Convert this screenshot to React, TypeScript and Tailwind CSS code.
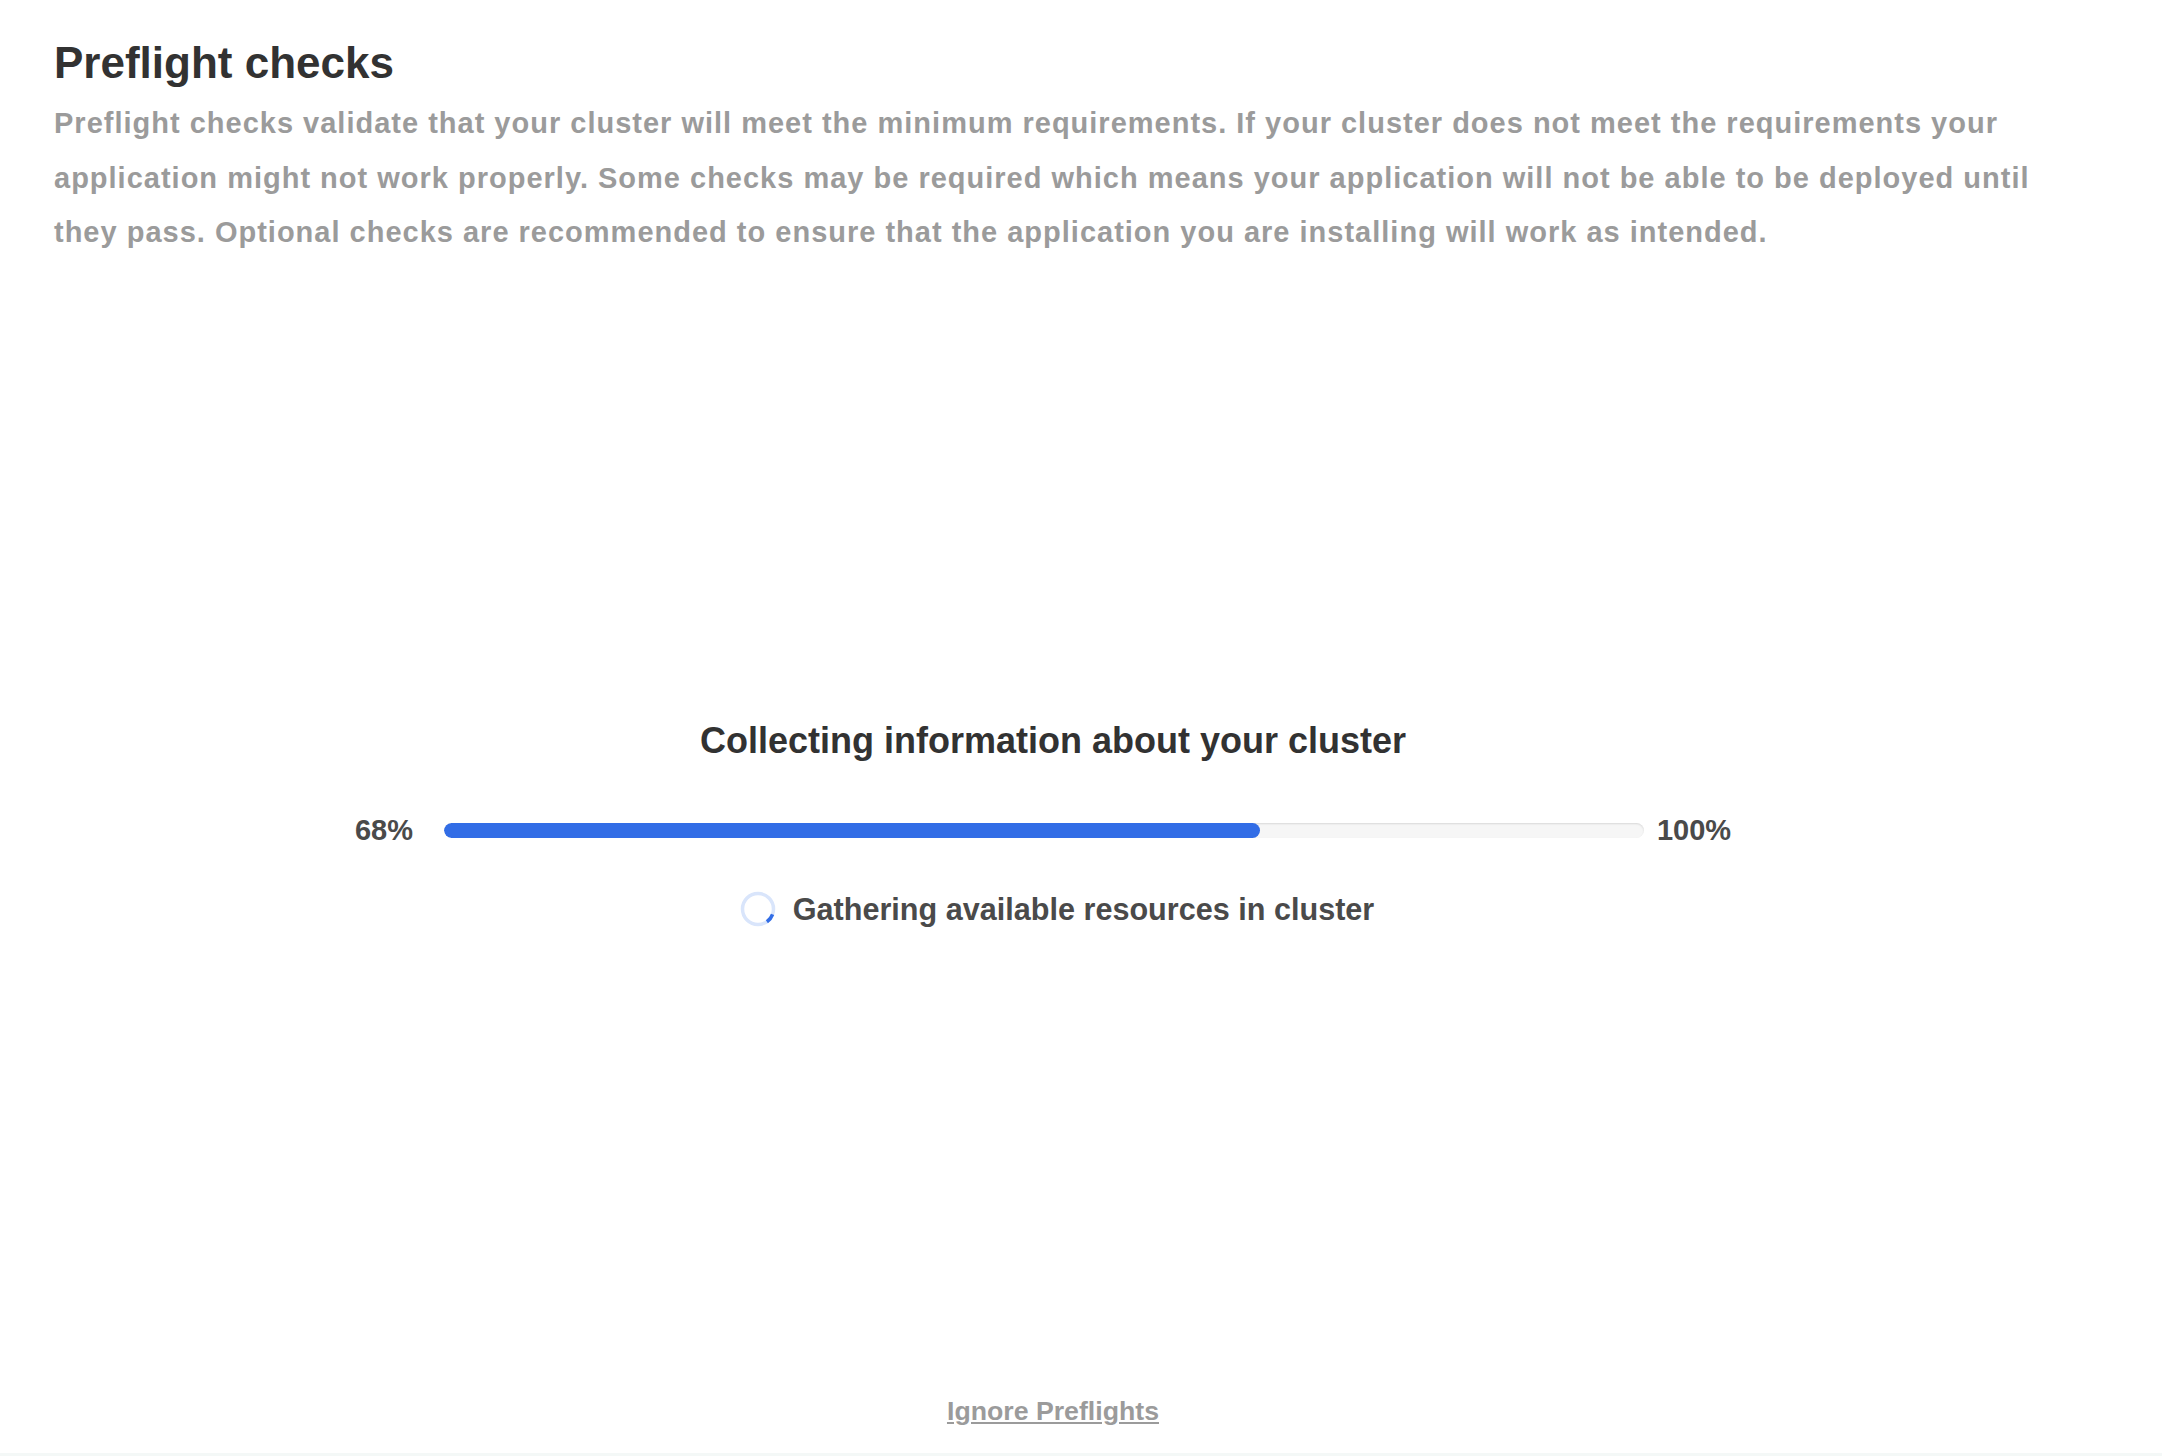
import React from 'react';

const PERCENT = 68;

const Spinner: React.FC = () => (
  <svg width="36" height="36" viewBox="0 0 36 36" className="shrink-0">
    <circle cx="18" cy="18" r="15.5" fill="none" stroke="#d9e5fb" strokeWidth="3.5" />
    <path d="M32.57 23.3 A15.5 15.5 0 0 1 26.89 30.7" fill="none" stroke="#326de6" strokeWidth="3.5" />
  </svg>
);

export default function App() {
  return (
    <div className="flex h-screen flex-col bg-white font-['Liberation_Sans',Arial,sans-serif]">
      <div className="pl-[54px] pr-[40px] pt-[41px]">
        <h1 className="text-[44px] font-bold leading-none text-[#323232]">Preflight checks</h1>
        <p className="mt-[11px] text-[29px] font-bold leading-[54.5px] tracking-[1px] text-[#9b9b9b]">
          Preflight checks validate that your cluster will meet the minimum requirements. If your cluster does not meet the requirements your
          <br />
          application might not work properly. Some checks may be required which means your application will not be able to be deployed until
          <br />
          they pass. Optional checks are recommended to ensure that the application you are installing will work as intended.
        </p>
      </div>

      <div className="flex flex-1 flex-col items-center justify-center pl-[54px] pr-[110px]">
        <h2 className="text-[36px] font-bold leading-none text-[#323232]">Collecting information about your cluster</h2>

        <div className="mt-[57px] flex items-center pr-[20px]">
          <span className="mr-[31px] text-[29px] font-bold leading-none text-[#4a4a4a]">{PERCENT}%</span>
          <div className="h-[15px] w-[1200px] overflow-hidden rounded-full bg-[#f6f6f6] shadow-[inset_0_1px_2px_rgba(0,0,0,0.12)]">
            <div className="h-full rounded-full bg-[#326de6]" style={{ width: `${PERCENT}%` }} />
          </div>
          <span className="ml-[13px] text-[29px] font-bold leading-none text-[#4a4a4a]">100%</span>
        </div>

        <div className="mt-[46px] flex items-start gap-[17px] pl-[8px]">
          <Spinner />
          <span className="mt-[3px] text-[30.6px] font-bold leading-none text-[#4a4a4a]">Gathering available resources in cluster</span>
        </div>
      </div>

      <div className="flex justify-center pb-[28px] pl-[54px] pr-[110px] pt-[7px]">
        <a href="#" className="text-[26.7px] font-bold leading-none text-[#9b9b9b] underline">
          Ignore Preflights
        </a>
      </div>
      <div className="h-[3px] bg-[#f4f8f7]" />
    </div>
  );
}
